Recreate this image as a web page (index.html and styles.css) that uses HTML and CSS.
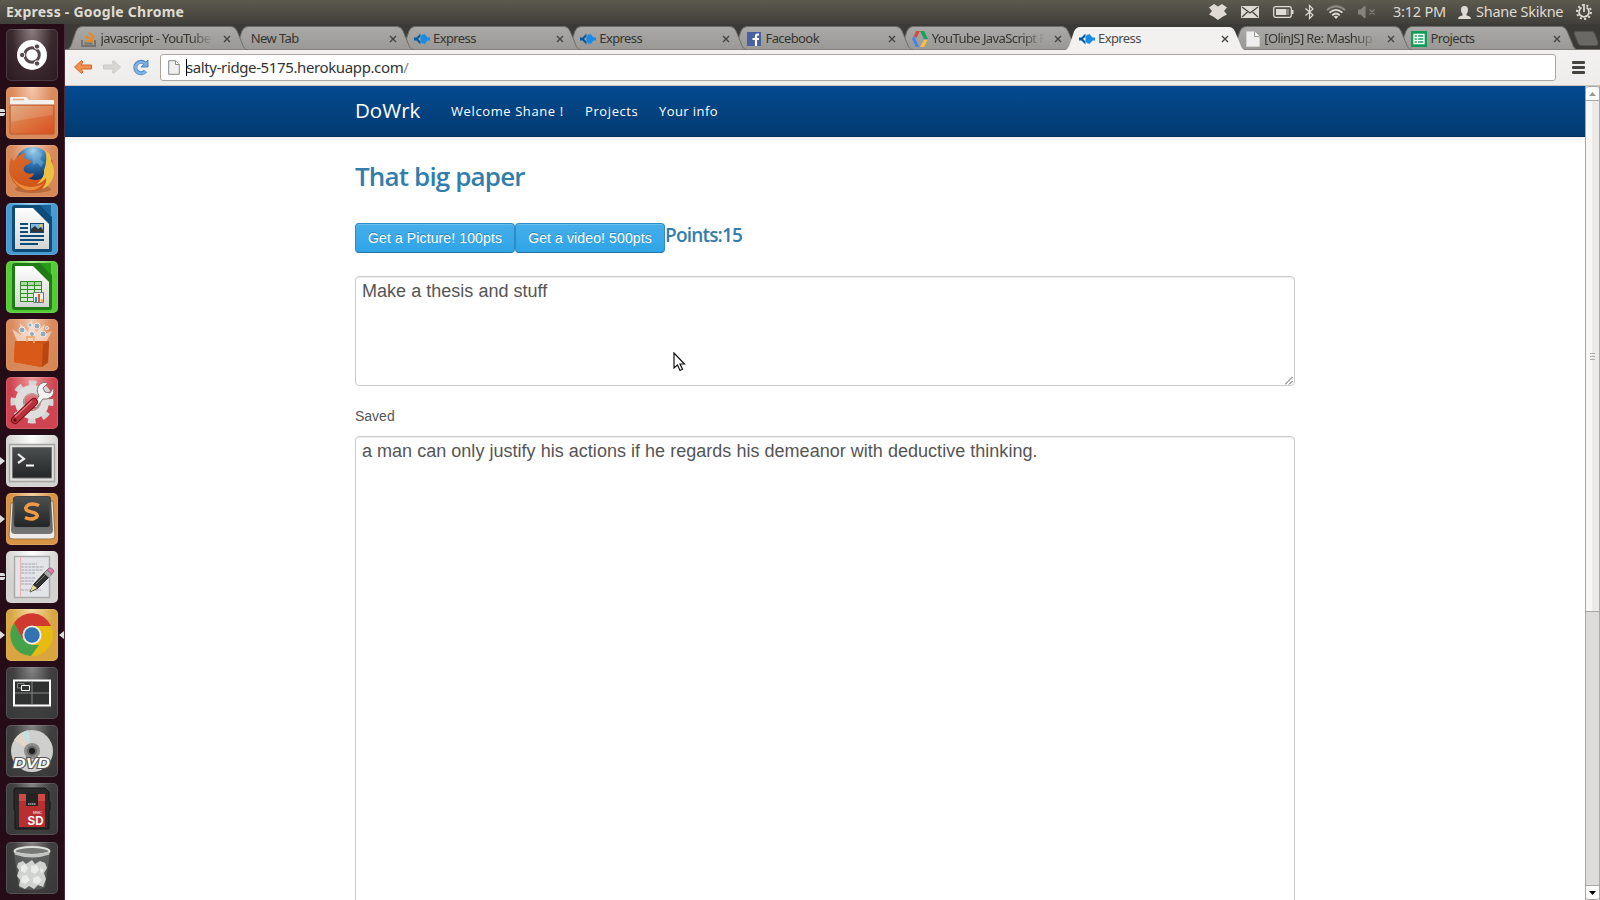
FILE: index.html
```
<!DOCTYPE html>
<html lang="en">
<head>
<meta charset="utf-8">
<title>Express - Google Chrome</title>
<link rel="stylesheet" href="styles.css">
</head>
<body>
<svg class="defs" width="0" height="0" aria-hidden="true">
  <defs>
    <linearGradient id="tabFill" x1="0" y1="0" x2="0" y2="1"><stop offset="0" stop-color="#aaa9a7"/><stop offset="1" stop-color="#999895"/></linearGradient>
    <linearGradient id="orange" x1="0" y1="0" x2="1" y2="1"><stop offset="0" stop-color="#d8a070"/><stop offset=".5" stop-color="#de7440"/><stop offset="1" stop-color="#d94f20"/></linearGradient>
    <linearGradient id="paper" x1="0" y1="0" x2="0" y2="1"><stop offset="0" stop-color="#fff"/><stop offset="1" stop-color="#d4d4d4"/></linearGradient>
    <linearGradient id="screen" x1="0" y1="0" x2="0" y2="1"><stop offset="0" stop-color="#4c4f4f"/><stop offset="1" stop-color="#232626"/></linearGradient>
    <linearGradient id="keycap" x1="0" y1="0" x2="0" y2="1"><stop offset="0" stop-color="#3f4040"/><stop offset="1" stop-color="#777"/></linearGradient>
    <linearGradient id="flame" x1="0" y1="0" x2="0" y2="1"><stop offset="0" stop-color="#d96a2c"/><stop offset="1" stop-color="#cf5318"/></linearGradient>
    <radialGradient id="globe" cx=".5" cy=".1" r=".8"><stop offset="0" stop-color="#a9d8ee"/><stop offset=".45" stop-color="#3277b5"/><stop offset="1" stop-color="#0d3568"/></radialGradient>
    <symbol id="tab" viewBox="0 0 182 24"><path d="M0 24C4 23 5 20 6 17L10 5Q12 .5 16 .5H165Q169 .5 171 5L176 17C177 20 178 23 182 24Z"/></symbol>
    <symbol id="close" viewBox="0 0 8 8"><path d="M1 1L7 7M7 1L1 7" stroke="#444" stroke-width="1.4"/></symbol>
    <symbol id="express" viewBox="0 0 16 16"><path d="M6.500 2.500V5.500L4 8L6.500 10.500V13.500L2.500 9.500H0V6.500H2.500Z" fill="#075a9c"/><path d="M6.500 5.500L8.500 3.500H10V2.500L13.500 6.500H16V9.500H13.500L10 13.500V12.500H8.500L6.500 10.500Z" fill="#168be8"/></symbol>
  </defs>
</svg>
<header class="panel">
  <span class="panel-title">Express - Google Chrome</span>
  <div class="indicators">
    <svg class="i-drop" width="18" height="16" viewBox="0 0 18 16"><path d="M5 0L9 2.500L13 0L18 3.500L15 7L18 10.500L14 12.500L9 16L4 12.500L0 10.500L3 7L0 3.500Z" fill="#dfdbd2"/></svg>
    <svg class="i-mail" width="18" height="12" viewBox="0 0 18 12"><path d="M0 0H18V12H0Z" fill="#dfdbd2"/><path d="M1 1L9 7L17 1M1 11L6.500 6M17 11L11.500 6" fill="none" stroke="#454440" stroke-width="1.200"/></svg>
    <svg class="i-bat" width="21" height="12" viewBox="0 0 21 12"><rect x=".7" y=".7" width="17.600" height="10.600" rx="2" fill="none" stroke="#dfdbd2" stroke-width="1.300"/><path d="M3 3H13V9H3ZM19 4H20.500V8H19Z" fill="#dfdbd2"/><path d="M13 3H16V9H13Z" fill="#8a8880"/></svg>
    <svg class="i-bt" width="9" height="16" viewBox="0 0 9 16"><path d="M.5 4.500L8 11L4.500 14.500V1.500L8 5L.5 11.500" fill="none" stroke="#dfdbd2" stroke-width="1.200"/></svg>
    <svg class="i-wifi" width="20" height="14" viewBox="0 0 20 14"><g fill="none" stroke-width="1.700"><path d="M1 5Q10-2.500 19 5" stroke="#8d8b84"/><path d="M3.500 7.700Q10 2 16.500 7.700M6.200 10.300Q10 6.700 13.800 10.300" stroke="#dfdbd2"/></g><path d="M7.800 11.500Q10 10 12.200 11.500L10 14Z" fill="#dfdbd2"/></svg>
    <svg class="i-vol" width="18" height="12" viewBox="0 0 18 12"><path d="M0 4H3L7 0V12L3 8H0ZM11.500 3.500L16.500 8.500M16.500 3.500L11.500 8.500" fill="#85837c" stroke="#85837c" stroke-width="1.200"/></svg>
    <span class="clock">3:12 PM</span>
    <svg class="i-user" width="13" height="13" viewBox="0 0 13 13"><path d="M6.500 0C9 0 10 1.500 10 4C10 6 9 7 8.500 8V9.500Q13 10 13 13H0Q0 10 4.500 9.500V8C4 7 3 6 3 4C3 1.500 4 0 6.500 0Z" fill="#dfdbd2"/></svg>
    <span class="user">Shane Skikne</span>
    <svg class="i-power" width="16" height="16" viewBox="0 0 16 16"><circle cx="8" cy="8" r="7" fill="none" stroke="#dfdbd2" stroke-width="2" stroke-dasharray="2 2.400"/><path d="M5.500 3.600A5 5 0 1 0 10.500 3.600M8 0V8" fill="none" stroke="#dfdbd2" stroke-width="1.700"/></svg>
  </div>
</header>
<div class="desktop">
<nav class="launcher">
  <div class="tile dash"><svg viewBox="0 0 52 52"><circle cx="26" cy="26" r="15" fill="#fff"/><circle cx="26" cy="26" r="7.300" fill="none" stroke="#55484b" stroke-width="3"/><g fill="#55484b" stroke="#fff" stroke-width="1"><circle cx="16.200" cy="26" r="2.700"/><circle cx="31" cy="17.500" r="2.700"/><circle cx="31" cy="34.500" r="2.700"/></g></svg></div>
  <div class="tile files"><i class="pip two"></i><svg viewBox="0 0 52 52"><path d="M4 11Q4 10 5 10H19Q21 10 22 12L23 13H47Q48 13 48 14V20H4Z" fill="#f3f1ef"/><path d="M7 12.500H18" stroke="#e8a47e" stroke-width="1.500"/><path d="M4 18H48V46Q48 47 47 47H5Q4 47 4 46Z" fill="url(#orange)" stroke="#bd572d"/><path d="M5 19H47V28Q24 31 5 35Z" fill="#fff" opacity=".14"/></svg></div>
  <div class="tile firefox"><svg viewBox="0 0 52 52"><ellipse cx="27" cy="44" rx="18" ry="4" fill="#9d572b" opacity=".6"/><circle cx="27" cy="20" r="18" fill="url(#globe)"/><path d="M30 6L36 9L34 14L38 17L35 22L31 18L27 20L26 13Z" fill="#7fb8dc" opacity=".5"/><path d="M5 13L8 16Q12 9 19 8L18 13L25 16Q24 19 20 20Q17 22 18 26Q21 30 28 28Q27 33 22 33Q31 38 39 31Q43 24 40 17L46 14Q50 27 44 37Q35 48 22 46Q8 43 4 30Q2 20 5 13Z" fill="url(#flame)"/><path d="M39 5Q46 10 45 16Q50 24 47 33Q43 42 36 44Q41 38 40 33Q36 38 31 39Q39 32 38 25Q42 15 39 5Z" fill="#edc043"/><path d="M5 30Q11 41 24 42Q33 42 38 38Q31 47 20 45Q9 41 5 30Z" fill="#e98f3d"/></svg></div>
  <div class="tile writer"><svg viewBox="0 0 52 52"><path d="M7 2H37L46 14V47Q46 49 44 49H9Q6 49 6 46V5Q6 2 9 2Z" fill="#0d4c78"/><path d="M34 2H45V14Z" fill="#17639b"/><path d="M9 5H27L43 21V46H9Z" fill="url(#paper)"/><path d="M14 21H22M14 25H22M14 29H22M14 33H38M14 37H38M14 41H32" stroke="#0d4c78" stroke-width="2"/><path d="M24 20H38V30H24Z" fill="#0d4c78"/><path d="M25 21H37V29H25Z" fill="#7fb8d8"/><path d="M25 29V26L29 23L32 26L35 24L37 27V29Z" fill="#333"/><circle cx="35" cy="22.500" r="1.500" fill="#f5c34b"/></svg></div>
  <div class="tile calc"><svg viewBox="0 0 52 52"><path d="M7 2H37L46 14V47Q46 49 44 49H9Q6 49 6 46V5Q6 2 9 2Z" fill="#207a16"/><path d="M34 2H45V14Z" fill="#259b19"/><path d="M9 5H27L43 21V46H9Z" fill="url(#paper)"/><path d="M14 20H36V41H14Z" fill="#338c24"/><path d="M15 21h6v3h-6zm7 0h6v3h-6zm7 0h6v3h-6z" fill="#a9d9a0"/><path d="M15 25h6v3h-6zm7 0h6v3h-6zm7 0h6v3h-6zm-14 4h6v3h-6zm7 0h6v3h-6zm7 0h6v3h-6zm-14 4h6v3h-6zm7 0h6v3h-6zm-7 4h6v3h-6zm7 0h6v3h-6z" fill="#d6ead2"/><path d="M27.500 31.500H37.500V41.500H27.500Z" fill="#f2f0ed" stroke="#777"/><path d="M29 36h2v5h-2z" fill="#2e86d1"/><path d="M32 33h2v8h-2z" fill="#df5b2a"/><path d="M35 38h2v3h-2z" fill="#f2b63d"/></svg></div>
  <div class="tile software"><svg viewBox="0 0 52 52"><path d="M11 22L6 10L15 16L14 4L22 13L25 1L30 13L39 5L36 16L46 12L40 23Z" fill="#fff" opacity=".5"/><g fill="#8eabc2" stroke="#f5eee9"><circle cx="16" cy="11" r="3"/><circle cx="31" cy="7" r="3"/><circle cx="26" cy="15" r="2.500"/><circle cx="37" cy="15" r="3"/><circle cx="24" cy="6" r="2"/><circle cx="41" cy="9" r="1.500"/></g><path d="M9 22L43 22L42 44L35 48L8 43Z" fill="#d15415"/><path d="M9 22L37 25L36 48L8 43Z" fill="#d95a18"/><path d="M37 25L43 22L42 43L36 48Z" fill="#b54713"/><path d="M21 23V18H28V24" fill="none" stroke="#efb077" stroke-width="1.800"/></svg></div>
  <div class="tile settings"><svg viewBox="0 0 52 52"><circle cx="26" cy="25" r="18.500" fill="none" stroke="#d4d4d4" stroke-width="6" stroke-dasharray="7.500 7.030" stroke-dashoffset="3.700"/><circle cx="26" cy="25" r="13" fill="none" stroke="#dededc" stroke-width="8"/><circle cx="26" cy="25" r="8" fill="none" stroke="#aaa" stroke-width="1"/><path d="M27 28L33 19Q29 12 34 7Q38 4 42 6L37 11L39 15L44 16L47 11Q49 17 45 20Q41 23 37 22L30 31Z" fill="#f2f2f0" stroke="#7d7776"/><path d="M9 43L28 25" stroke="#7b0e18" stroke-width="8" stroke-linecap="round"/><path d="M9 43L28 25" stroke="#b9313a" stroke-width="6" stroke-linecap="round"/><path d="M9 40L26 24" stroke="#e8747a" stroke-width="1.300"/><circle cx="9" cy="43" r="1.700" fill="#5d171b"/></svg></div>
  <div class="tile terminal"><i class="pip"></i><svg viewBox="0 0 52 52"><path d="M3.500 9.500H48.500V46.500H3.500Z" fill="#dededc" stroke="#a2a29f" stroke-width="1.300"/><path d="M6.500 12.500H45.500V43H6.500Z" fill="url(#screen)" stroke="#707371"/><path d="M12 19L18 24L12 28" fill="none" stroke="#e9ecea" stroke-width="2.200"/><path d="M20 30.500H28" stroke="#fff" stroke-width="2"/></svg></div>
  <div class="tile sublime"><i class="pip"></i><svg viewBox="0 0 52 52"><path d="M5 10L3 43Q3 46 7 46H45Q49 46 49 43L47 8Z" fill="#eeecea" stroke="#977449"/><path d="M7 5Q8 3 11 3H42Q45 3 45 6L47 37Q47 41 43 41H9Q5 41 5 37Z" fill="url(#keycap)"/><path d="M9 4H43L44 31Q44 34 41 34H11Q8 34 8 31Z" fill="url(#screen)"/><path d="M33 12.500Q28 10 23 11.500Q17 15 22 18L29 20Q34 23 28 25.500Q24 27 19 24.500" fill="none" stroke="#f29a43" stroke-width="3.500"/></svg></div>
  <div class="tile editor"><i class="pip two"></i><svg viewBox="0 0 52 52"><path d="M8.500 5.500H43.500V46.500H8.500Z" fill="#e2e4e8" stroke="#aaa" stroke-width="1.500"/><path d="M14.500 6V46" stroke="#efb0ae"/><path d="M15 13h16m-16 3h23m-23 3h22m-22 3h14m-14 5h15m-15 3h13m-13 3h11m-11 6h20" stroke="#a3a6ab" stroke-width="1" stroke-dasharray="3 .7"/><path d="M24 41L28 33L41 19L46 23L32 37Z" fill="#333" stroke="#222"/><path d="M30 33L42 21" stroke="#777"/><path d="M24 41L27 34L31 37Z" fill="#e6df91"/><path d="M38 22L41 19L46 23L43 27Z" fill="#aaa"/><path d="M41 19L43 17Q46 16 48 20L46 23Z" fill="#d981a6" stroke="#a46583"/></svg></div>
  <div class="tile chrome"><i class="pip"></i><i class="pip focus"></i><svg viewBox="0 0 52 52"><circle cx="26" cy="26" r="21" fill="#e7bb12"/><path d="M8 14L18 31L26 36H33L25 47A21 21 0 0 1 8 14" fill="#45a248"/><path d="M8 14A21 21 0 0 1 45 17H26L17 30Z" fill="#cf3930"/><circle cx="26" cy="26" r="9.500" fill="#f3f0e9"/><circle cx="26" cy="26" r="7.700" fill="#3274b1"/></svg></div>
  <div class="tile dark workspaces"><svg viewBox="0 0 52 52"><path d="M8 13.500H44V38.500H8Z" fill="#303131" stroke="#fff" stroke-width="2"/><path d="M26 14V38M9 26H43" stroke="#888"/><path d="M11.500 16.500H18V21H11.500Z" fill="none" stroke="#888"/><path d="M15.500 18.500H23.500V23.500H15.500Z" fill="#333" stroke="#fff"/></svg></div>
  <div class="tile dark dvd"><svg viewBox="0 0 52 52"><circle cx="26" cy="26" r="21" fill="#cfcfcd"/><path d="M26 26L8 15A21 21 0 0 1 15 8Z" fill="#e5d6cc"/><path d="M26 26L15 8L22 5Z" fill="#c9e0df"/><path d="M26 26L43 38A21 21 0 0 1 34 45Z" fill="#eee"/><circle cx="26" cy="26" r="8" fill="#8c8c8b"/><circle cx="26" cy="26" r="5" fill="#656565"/><circle cx="26" cy="26" r="3" fill="#1c1c1c"/><text class="dvd-text" x="7" y="43" textLength="37" lengthAdjust="spacingAndGlyphs">DVD</text></svg></div>
  <div class="tile dark sd"><svg viewBox="0 0 52 52"><path d="M9 5H39L43 9V17L44 19V26L43 28V46H9V28L8 26V7Z" fill="#292929" stroke="#151515"/><path d="M13 11H39V44H13Z" fill="#b92e2e"/><path d="M13 11H20V18H13ZM32 11H39V18H32Z" fill="#cf4947"/><path d="M20 10H32V23H20Z" fill="#252525"/><path d="M22 21H30" stroke="#aaa" stroke-width="1.500" stroke-dasharray="1.500 .5"/><text class="mmc-text" x="27" y="31" textLength="9" lengthAdjust="spacingAndGlyphs">MMC</text><text class="sd-text" x="21.500" y="42" textLength="16" lengthAdjust="spacingAndGlyphs">SD</text></svg></div>
  <div class="tile dark trash"><svg viewBox="0 0 52 52"><path d="M8 10L13 46Q26 50 39 46L44 10Z" fill="#606261" opacity=".8"/><path d="M12 21L17 19L20 22L26 18L29 22L34 19L39 21L41 26L38 31L40 37L37 45L32 43L28 47L23 44L19 47L13 44L14 38L11 34L13 28L11 25Z" fill="#d0d2cf"/><path d="M15 24L19 22L22 26L19 31L15 29ZM25 24L31 23L33 28L29 32L25 30ZM34 26L38 28L35 32ZM16 34L21 33L24 38L19 42L15 40ZM27 36L32 34L36 38L32 42L27 41Z" fill="#ebecea"/><ellipse cx="26" cy="9" rx="17.500" ry="4" fill="#777978" stroke="#e0e1df" stroke-width="2"/><path d="M9 11Q26 17 43 11" fill="none" stroke="#c4c5c3" stroke-width="3"/></svg></div>
</nav>
<main class="window">
  <div class="tabs">
    <div class="tab t1"><svg class="shape"><use href="#tab"/></svg><svg class="fav" viewBox="0 0 16 16"><path d="M1 9V15H14V9M3.500 12.500H11.500" fill="none" stroke="#747370" stroke-width="2"/><path d="M4 9.500L12 10.500M5 5.500L12 9M8 1.500L13 7" stroke="#e58a25" stroke-width="2"/></svg><span class="label fade">javascript - YouTube</span><svg class="x"><use href="#close"/></svg></div>
    <div class="tab t2"><svg class="shape"><use href="#tab"/></svg><span class="label">New Tab</span><svg class="x"><use href="#close"/></svg></div>
    <div class="tab t3"><svg class="shape"><use href="#tab"/></svg><svg class="fav"><use href="#express"/></svg><span class="label">Express</span><svg class="x"><use href="#close"/></svg></div>
    <div class="tab t4"><svg class="shape"><use href="#tab"/></svg><svg class="fav"><use href="#express"/></svg><span class="label">Express</span><svg class="x"><use href="#close"/></svg></div>
    <div class="tab t5"><svg class="shape"><use href="#tab"/></svg><svg class="fav" viewBox="0 0 16 16"><path d="M1 1H15V15H1Z" fill="#4861a3"/><path d="M13 3.500H11.500Q10 3.500 10 5.500V15M6.500 8H13" fill="none" stroke="#fff" stroke-width="2.200"/></svg><span class="label">Facebook</span><svg class="x"><use href="#close"/></svg></div>
    <div class="tab t6"><svg class="shape"><use href="#tab"/></svg><svg class="fav" viewBox="0 0 16 16"><path d="M4 0H8L4.500 7L2 5Z" fill="#d64b3e"/><path d="M0 8L2 4.500L7 16H4Z" fill="#4286ed"/><path d="M8 0H12L16 8H12Z" fill="#18a05e"/><path d="M12 9H15.500L12 16H8Z" fill="#f6c33a"/></svg><span class="label fade">YouTube JavaScript P</span><svg class="x"><use href="#close"/></svg></div>
    <div class="tab active"><svg class="shape"><use href="#tab"/></svg><svg class="fav"><use href="#express"/></svg><span class="label">Express</span><svg class="x"><use href="#close"/></svg></div>
    <div class="tab t8"><svg class="shape"><use href="#tab"/></svg><svg class="fav" viewBox="0 0 16 16"><path d="M1.500 .5H9.500L14.500 5.500V15.500H1.500Z" fill="#eee" stroke="#d0cfcd"/><path d="M9.500 .5V5.500H14.500" fill="#fff" stroke="#999"/></svg><span class="label fade">[OlinJS] Re: Mashup s</span><svg class="x"><use href="#close"/></svg></div>
    <div class="tab t9"><svg class="shape"><use href="#tab"/></svg><svg class="fav" viewBox="0 0 16 16"><path d="M0 0H16V16H0Z" fill="#119d59"/><path d="M3 3.500H13V12.500H3ZM3 6.500H13M3 9.500H13M6.500 3.500V12.500" fill="none" stroke="#fff" stroke-width="1.300"/></svg><span class="label">Projects</span><svg class="x"><use href="#close"/></svg></div>
    <svg class="newtab" viewBox="0 0 26 15"><path d="M3 .5H19Q21 .5 22 3L25 12Q25 14.500 23 14.500H8Q6 14.500 5 12L1 2Q1 .5 3 .5Z" fill="#6b6965" stroke="#55534e"/></svg>
  </div>
  <div class="toolbar">
    <svg class="back" viewBox="0 0 18 16"><path d="M.5 8L7.500 1.500L9 3L7 6H17.500V10H7L9 13L7.500 14.500Z" fill="#f09150" stroke="#d86527" stroke-linejoin="round"/></svg>
    <svg class="fwd" viewBox="0 0 18 16"><path d="M17.500 8L10.500 1.500L9 3L11 6H.5V10H11L9 13L10.500 14.500Z" fill="#d8d6d3" stroke="#cbc9c5" stroke-linejoin="round"/></svg>
    <svg class="reload" viewBox="0 0 16 17"><path d="M12.500 12A5.700 5.700 0 1 1 12 4.500" fill="none" stroke="#4f88c5" stroke-width="4"/><path d="M15 1V8H8Z" fill="#79aadd" stroke="#4f88c5"/><path d="M12.500 12.500A5.700 5.700 0 1 1 12 4.500" fill="none" stroke="#83b3e2" stroke-width="2.300"/></svg>
    <div class="address">
      <svg class="page-icon" viewBox="0 0 12 15"><path d="M.7 .7H7.500L11.300 4.500V14.300H.7Z" fill="#f0f0ef" stroke="#898989"/><path d="M7.500 .7V4.500H11.300" fill="#fff" stroke="#898989"/></svg>
      <i class="caret"></i><span class="url">salty-ridge-5175.herokuapp.com<span class="slash">/</span></span>
    </div>
    <div class="menu"><i></i><i></i><i></i></div>
  </div>
  <div class="viewport">
    <div class="page">
      <div class="navbar"><a class="brand">DoWrk</a><a class="n1">Welcome Shane !</a><a class="n2">Projects</a><a class="n3">Your info</a></div>
      <div class="container">
        <h1>That big paper</h1>
        <div class="rewards"><button class="b1">Get a Picture! 100pts</button><button class="b2">Get a video! 500pts</button><h2>Points:15</h2></div>
        <div class="area task">Make a thesis and stuff<svg class="grip" viewBox="0 0 8 8"><path d="M0 7.500L7.500 0M4 7.500L7.500 4" stroke="#555"/></svg></div>
        <p class="saved">Saved</p>
        <div class="area essay">a man can only justify his actions if he regards his demeanor with deductive thinking.</div>
      </div>
    </div>
    <div class="scrollbar"><div class="sb up"><svg viewBox="0 0 7 4"><path d="M3.500 0L7 4H0Z" fill="#999"/></svg></div><div class="thumb"><i></i><i></i><i></i></div><div class="track"></div><div class="sb down"><svg viewBox="0 0 7 4"><path d="M0 0H7L3.500 4Z" fill="#000"/></svg></div></div>
  </div>
</main>
</div>
<svg class="pointer" viewBox="0 0 13 20"><path d="M1 1V16L4.500 13L7 18.500L9.500 17.300L7 12H11.500Z" fill="#fff" stroke="#111" stroke-width="1.200"/></svg>
</body>
</html>
```
FILE: styles.css
```
* { box-sizing: border-box; }
html, body { margin: 0; height: 900px; overflow: hidden; }
body { width: 1600px; background: #fff; font-family: "Noto Sans", "Open Sans", sans-serif; display: flex; flex-direction: column; }
svg { display: block; flex: none; }
.defs { position: absolute; }
.panel { height: 24px; flex: none; display: flex; align-items: center; justify-content: space-between; background: linear-gradient(#5d5a4e, #403f3a); color: #dfdbd2; padding: 0 8px 0 6px; white-space: nowrap; }
.panel-title { font-size: 14px; font-weight: 700; line-height: 24px; letter-spacing: .25px; }
.indicators { display: flex; align-items: center; font-size: 14.5px; line-height: 23px; }
.indicators span { height: 24px; }
.i-mail, .i-bat { margin-left: 14px; }
.i-bt { margin-left: 11px; }
.i-wifi, .i-vol { margin-left: 12px; }
.clock { margin-left: 17px; width: 65px; letter-spacing: -.2px; }
.user { margin-left: 5px; width: 100px; letter-spacing: -.25px; }

.desktop { flex: 1; display: flex; min-height: 0; }
.launcher { width: 65px; flex: none; padding: 5px 0 0 6px; display: flex; flex-direction: column; gap: 6px; background: #260c16; border-right: 1px solid #4d2b3a; }
.tile { width: 52px; height: 52px; flex: none; border-radius: 5px; position: relative; box-shadow: inset 0 0 0 1px rgba(255,255,255,.12); }
.tile svg { width: 52px; height: 52px; }
.dash { background: radial-gradient(ellipse at 50% 0, #8b7d80, #3a2a2f 55%, #2b1b21); }
.files, .software, .firefox { background: radial-gradient(ellipse at 50% 0, #f4c8ae, #da8a5c 55%, #d58653); }
.writer { background: radial-gradient(ellipse at 50% 0, #9cceec, #469bd1 60%); }
.calc { background: radial-gradient(ellipse at 50% 0, #a8f490, #56cb38 60%); }
.settings { background: radial-gradient(ellipse at 50% 0, #ef9999, #cf4450 60%); }
.terminal, .editor { background: radial-gradient(ellipse at 50% 0, #fff, #d3d2d1 70%); }
.sublime { background: radial-gradient(ellipse at 50% 0, #f4cda0, #d89243 60%); }
.chrome { background: radial-gradient(ellipse at 50% 0, #f3daa0, #d8a540 60%); }
.dark { background: radial-gradient(ellipse at 50% 0, #858585, #404040 50%, #383838); }
.trash { margin-top: 1px; }
.pip { position: absolute; left: -6px; top: 22px; border: 4px solid transparent; border-left: 5px solid #dedcdc; border-right: 0; }
.pip.two { width: 5px; height: 7px; border: solid #dedcdc; border-width: 3px 0; top: 22px; border-radius: 0 2px 2px 0; }
.pip.focus { left: 53px; border-left: 0; border-right: 5px solid #dedcdc; }
.dvd-text { font: italic 700 14px "Liberation Sans", sans-serif; fill: #fff; stroke: #555; stroke-width: 2px; paint-order: stroke; }
.sd-text { font: 700 12px "Liberation Sans", sans-serif; fill: #fff; }
.mmc-text { font: 4px "Liberation Sans", sans-serif; fill: #fff; }

.window { flex: 1; display: flex; flex-direction: column; min-width: 0; }
.tabs { height: 26px; flex: none; padding-top: 2px; background: #3b3a36; display: flex; box-shadow: inset 0 -1px #77746f; isolation: isolate; }
.tab { width: 166.25px; flex: none; height: 24px; position: relative; display: flex; align-items: center; padding: 0 0 0 16px; color: #37352f; }
.shape { position: absolute; left: 1px; top: 0; width: 182px; height: 24px; fill: url(#tabFill); stroke: #6e6c68; stroke-width: 1; overflow: visible; z-index: -1; }
.t1 { z-index: 9; } .t2 { z-index: 8; } .t3 { z-index: 7; } .t4 { z-index: 6; } .t5 { z-index: 5; } .t6 { z-index: 4; } .t8 { z-index: 2; } .t9 { z-index: 1; }
.active { z-index: 20; color: #4c4c4c; }
.active .shape { fill: #f2f1f0; stroke: none; height: 25px; }
.fav { width: 16px; height: 16px; margin: 1px 3.500px 0 0; }
.t2 { padding-left: 19.500px; }
.label { font-size: 13px; letter-spacing: -.6px; line-height: 24px; height: 24px; width: 113px; overflow: hidden; white-space: nowrap; }
.t2 .label { width: 129px; }
.fade { -webkit-mask-image: linear-gradient(90deg, #000 80%, transparent 100%); mask-image: linear-gradient(90deg, #000 80%, transparent 100%); }
.x { width: 8px; height: 8px; margin: 2px 0 0 9.500px; }
.newtab { width: 26px; height: 15px; margin: 5px 0 0 12px; }
.toolbar { height: 36px; flex: none; background: linear-gradient(#f2f1f0, #efedeb); border-bottom: 1px solid #c9c6c2; display: flex; padding-left: 9px; }
.back, .fwd { width: 18px; height: 16px; margin-top: 9px; }
.fwd { margin-left: 11px; }
.reload { width: 16px; height: 17px; margin: 9px 0 0 12px; }
.address { width: 1396px; height: 27px; margin: 4px 0 0 11px; border: 1px solid #aaa59f; border-radius: 3px; background: #fff; display: flex; align-items: center; padding-left: 7px; }
.page-icon { width: 12px; height: 15px; }
.caret { width: 1px; height: 17px; background: #000; margin: 0 -1px 0 6px; }
.url { font-size: 15px; letter-spacing: -.38px; line-height: 25px; color: #333; }
.slash { color: #888; }
.menu { width: 13px; margin: 11px 0 0 16px; display: flex; flex-direction: column; gap: 2px; }
.menu i { height: 3px; background: #45443f; border-radius: 1px; }
.viewport { flex: 1; display: flex; min-height: 0; }
.page { width: 1520px; flex: none; overflow: hidden; }
.navbar { height: 51px; background: linear-gradient(#044a91, #033b70); border-bottom: 1px solid #032f5b; box-shadow: 0 1px 8px rgba(0,0,0,.1); display: flex; padding-left: 290px; color: #fff; font-family: "Open Sans", sans-serif; line-height: 49px; white-space: nowrap; }
.brand { font-size: 20.500px; width: 96px; line-height: 48px; }
.navbar a:not(.brand) { font-size: 13px; padding-top: 1px; font-weight: 500; letter-spacing: .6px; }
.n1 { width: 134px; } .n2 { width: 74px; }
.navbar a.n3 { letter-spacing: .42px; }
.container { width: 940px; margin-left: 290px; color: #555; font-family: "Liberation Sans", Arial, sans-serif; }
h1, h2 { color: #317eac; font-family: "Open Sans", sans-serif; font-weight: 600; margin: 0; white-space: nowrap; }
h1 { font-size: 26px; line-height: 40px; padding-top: 19px; letter-spacing: -.85px; }
.rewards { display: flex; height: 30px; margin-top: 27px; }
button { height: 30px; border: 1px solid #2b8cc9; border-bottom-color: #2472a4; border-radius: 4px; background: linear-gradient(#46aeea, #2fa4e7); color: #fff; font: 14px/20px "Liberation Sans", Arial, sans-serif; letter-spacing: .12px; padding: 0; text-shadow: 0 -1px 0 rgba(0,0,0,.25); box-shadow: inset 0 1px rgba(255,255,255,.2); white-space: nowrap; }
.b1 { width: 160px; } .b2 { width: 150px; }
h2 { font-size: 19px; line-height: 24px; letter-spacing: -.8px; }
.area { border: 1px solid #ccc; border-radius: 4px; padding: 4px 6px; font-size: 18px; letter-spacing: .025px; line-height: 20px; box-shadow: inset 0 1px 1px rgba(0,0,0,.075); position: relative; white-space: nowrap; }
.task { height: 110px; margin-top: 23px; }
.grip { position: absolute; right: 1px; bottom: 0; width: 8px; height: 8px; }
.saved { font-size: 14px; line-height: 20px; margin: 20px 0 10px; }
.essay { height: 500px; }
.scrollbar { width: 15px; flex: none; display: flex; flex-direction: column; border: solid #a9a7a4; border-width: 0 1px; background: #dddcda; }
.sb { height: 15px; background: #fcfcfb; display: flex; align-items: center; justify-content: center; border: 0 solid #a9a7a4; }
.sb svg { width: 7px; height: 4px; }
.up { border-top-width: 1px; border-bottom-width: 1px; border-radius: 3px 3px 0 0; }
.down { border-top-width: 1px; border-bottom-width: 1px; border-radius: 0 0 3px 3px; }
.thumb { height: 511px; background: linear-gradient(90deg, #f8f7f6 50%, #ebeae9 50%); border-bottom: 1px solid #a9a7a4; display: flex; flex-direction: column; gap: 2px; align-items: center; justify-content: center; }
.thumb i { width: 5px; height: 1px; background: #aaa; }
.track { flex: 1; }
.pointer { position: absolute; left: 673px; top: 352px; width: 13px; height: 20px; }
```
